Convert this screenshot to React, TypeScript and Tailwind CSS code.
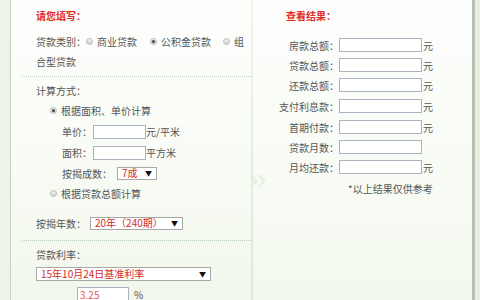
import React from "react";

const font = { fontFamily: '"Noto Sans CJK SC", "Liberation Sans", sans-serif' };

function Radio({ checked = false }: { checked?: boolean }) {
  return (
    <span className="mr-[4px] inline-grid h-[7px] w-[7px] shrink-0 place-items-center rounded-full border border-[#b9b9b9] bg-gradient-to-b from-[#f4f4f4] to-[#d2d2d2]">
      {checked ? <span className="h-[3px] w-[3px] rounded-full bg-[#444]" /> : null}
    </span>
  );
}

function Box({ w, value }: { w: string; value?: string }) {
  return (
    <input
      readOnly
      value={value ?? ""}
      className={`h-[14px] ${w} border border-[#a9b3bf] bg-white px-[2px] text-[10px] leading-[12px] text-[#e05a5a] outline-none`}
    />
  );
}

function Pick({ w, h = "h-[13px]", text }: { w: string; h?: string; text: string }) {
  return (
    <div className={`flex ${h} ${w} items-center justify-between border border-[#a8a8a8] bg-white pl-[4px] pr-[4px] text-[10px] leading-none text-[#d42a2a]`}>
      <span>{text}</span>
      <span className="text-[7px] text-[#111]">▼</span>
    </div>
  );
}

const RESULTS: { label: string; unit: boolean; mt: string }[] = [
  { label: "房款总额：", unit: true, mt: "mt-[10px]" },
  { label: "贷款总额：", unit: true, mt: "" },
  { label: "还款总额：", unit: true, mt: "" },
  { label: "支付利息款：", unit: true, mt: "mt-[1px]" },
  { label: "首期付款：", unit: true, mt: "mt-[1px]" },
  { label: "贷款月数：", unit: false, mt: "" },
  { label: "月均还款：", unit: true, mt: "" }
];

export default function App() {
  return (
    <div style={font} className="relative flex h-[300px] w-[480px] overflow-hidden bg-[#eef2ea] text-[10px] text-[#555]">
      {/* outer strip */}
      <div className="w-[10px] shrink-0 bg-[#eef3ea]" />
      <div className="w-px shrink-0 bg-[#cbd3c4]" />

      {/* left: form */}
      <div className="w-[240px] shrink-0 bg-gradient-to-b from-[#fefefd] via-[#f9fcf6] to-[#f2f7ec] pl-[25px]">
        <div className="mt-[5px] flex h-[20px] items-center font-bold text-[#e02b2b]">请您填写：</div>

        <div className="mt-[6px] flex h-[20px] items-center whitespace-nowrap">
          <span>贷款类别：</span>
          <Radio />
          <span>商业贷款</span>
          <span className="ml-[13px]" />
          <Radio checked />
          <span>公积金贷款</span>
          <span className="ml-[12px]" />
          <Radio />
          <span>组</span>
        </div>
        <div className="flex h-[20px] items-center">合型贷款</div>

        <div className="-ml-[14px] mt-[5px] border-t border-dotted border-[#b9cbc4]" />

        <div className="mt-[3px] flex h-[20px] items-center">计算方式：</div>
        <div className="flex h-[20px] items-center pl-[14px]">
          <Radio checked />
          <span>根据面积、单价计算</span>
        </div>
        <div className="mt-px flex h-[21px] items-center pl-[26px]">
          <span className="w-[31px]">单价：</span>
          <Box w="w-[53px]" />
          <span>元/平米</span>
        </div>
        <div className="flex h-[21px] items-center pl-[26px]">
          <span className="w-[31px]">面积：</span>
          <Box w="w-[53px]" />
          <span>平方米</span>
        </div>
        <div className="flex h-[20px] items-center pl-[26px]">
          <span className="w-[55px]">按揭成数：</span>
          <Pick w="w-[40px]" text="7成" />
        </div>
        <div className="flex h-[20px] items-center pl-[14px]">
          <Radio />
          <span>根据贷款总额计算</span>
        </div>

        <div className="mt-[10px] flex h-[20px] items-center">
          <span className="w-[54px]">按揭年数：</span>
          <Pick w="w-[93px]" text="20年（240期）" />
        </div>

        <div className="-ml-[14px] mt-[7px] border-t border-dotted border-[#b9cbc4]" />

        <div className="mt-[3px] flex h-[20px] items-center">贷款利率：</div>
        <div className="flex h-[20px] items-center">
          <Pick w="w-[175px]" h="h-[14px]" text="15年10月24日基准利率" />
        </div>
        <div className="flex h-[20px] items-center pl-[41px]">
          <Box w="w-[52px]" value="3.25" />
          <span className="ml-[5px]">%</span>
        </div>
      </div>

      {/* divider */}
      <div className="w-[2px] shrink-0 bg-gradient-to-b from-[#f1f4ee] to-[#dfe7d8]" />

      {/* right: results */}
      <div className="w-[219px] shrink-0 bg-gradient-to-b from-[#fefefd] via-[#f9fcf6] to-[#f3f8ee]">
        <div className="mt-[5px] flex h-[20px] items-center pl-[33px] font-bold text-[#e02b2b]">查看结果：</div>
        {RESULTS.map((r) => (
          <div key={r.label} className={`flex h-[20px] items-center ${r.mt}`}>
            <span className="w-[86px] text-right">{r.label}</span>
            <Box w="w-[83px]" />
            {r.unit ? <span className="ml-px">元</span> : null}
          </div>
        ))}
        <div className="mt-px flex h-[20px] items-center pl-[95px]">*以上结果仅供参考</div>
      </div>

      {/* right frame */}
      <div className="w-[3px] shrink-0 bg-[#b7bfae]" />
      <div className="w-[5px] shrink-0 bg-[#e9eee4]" />

      {/* decorative chevrons on the divider */}
      <svg className="absolute left-[248px] top-[174px]" width="20" height="14" viewBox="0 0 20 14">
        <path d="M1 1 L7 7 L1 13 L4 13 L10 7 L4 1 Z" fill="#e6efdc" />
        <path d="M9 1 L15 7 L9 13 L12 13 L18 7 L12 1 Z" fill="#e6efdc" />
      </svg>
    </div>
  );
}
